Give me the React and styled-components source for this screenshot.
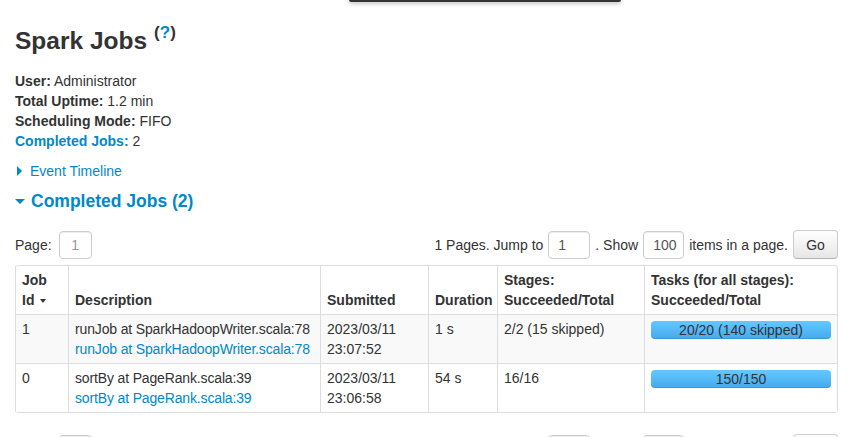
import React from 'react'
import styled, {createGlobalStyle} from 'styled-components'

const GlobalStyle = createGlobalStyle`
  body {
    margin: 0;
    background: #fff;
    color: #333;
    font-family: "Liberation Sans", Arial, sans-serif;
    font-size: 14px;
    line-height: 20px;
  }
`

const Page = styled.div`
  position: relative;
  padding: 0 21px 0 15px;
`

const TopShade = styled.div`
  position: absolute;
  top: 0;
  left: 349px;
  width: 272px;
  height: 2px;
  background: #333;
  box-shadow: 0 1px 4px rgba(0,0,0,0.45);
  border-radius: 0 0 3px 3px;
`

const Title = styled.h3`
  margin: 0;
  padding-top: 15px;
  font-size: 24.5px;
  line-height: 40px;
  font-weight: bold;
  color: #333;
`

const Help = styled.sup`
  font-size: 17px;
  margin-left: 7px;
  position: relative;
  top: -2px;
  color: #333;
  & span { color: #0088cc; }
`

const InfoList = styled.ul`
  list-style: none;
  margin: 10px 0 0;
  padding: 0;
`

const InfoItem = styled.li`
  color: #333;
  & strong { color: ${p => (p.$link ? '#0088cc' : '#333')}; }
`

const Toggle = styled.div`
  display: flex;
  align-items: center;
  color: #0088cc;
  margin-top: ${p => p.$mt}px;
  font-size: ${p => p.$size}px;
  font-weight: ${p => (p.$bold ? 'bold' : 'normal')};
  line-height: 20px;
`

const Caret = styled.span`
  display: inline-block;
  width: 0;
  height: 0;
  margin-right: ${p => p.$gap}px;
  ${p => p.$down
    ? 'border-left: 5px solid transparent; border-right: 5px solid transparent; border-top: 5px solid #0088cc; margin-left: 0;'
    : 'border-top: 5px solid transparent; border-bottom: 5px solid transparent; border-left: 5px solid #0088cc; margin-left: 2px;'}
`

const PagerRow = styled.div`
  display: flex;
  align-items: center;
  justify-content: space-between;
  margin-top: ${p => p.$mt}px;
  height: 29px;
`

const PagerGroup = styled.div`
  display: flex;
  align-items: center;
  white-space: nowrap;
`

const Box = styled.div`
  box-sizing: border-box;
  width: ${p => p.$w}px;
  height: 28px;
  border: 1px solid #ccc;
  border-radius: 4px;
  padding: 3px 9px;
  margin: 0 ${p => p.$mr || 5}px 0 ${p => p.$ml || 5}px;
  color: ${p => (p.$muted ? '#999' : '#555')};
  text-align: ${p => (p.$center ? 'center' : 'left')};
  box-shadow: inset 0 1px 1px rgba(0,0,0,0.075);
  line-height: 20px;
`

const GoButton = styled.button`
  box-sizing: border-box;
  width: 45px;
  height: 29px;
  margin-left: 5px;
  border: 1px solid #ccc;
  border-bottom-color: #b3b3b3;
  border-radius: 4px;
  background: linear-gradient(to bottom, #fff, #e6e6e6);
  font-family: "Liberation Sans", Arial, sans-serif;
  font-size: 14px;
  color: #333;
  padding: 0;
`

const Table = styled.table`
  width: 100%;
  margin-top: 6px;
  border-collapse: separate;
  border-spacing: 0;
  border: 1px solid #ddd;
  border-left: 0;
  border-radius: 4px;
  table-layout: fixed;
`

const Th = styled.th`
  text-align: left;
  vertical-align: bottom;
  font-weight: bold;
  padding: 4px 6px;
  border-left: 1px solid #ddd;
  width: ${p => p.$w}px;
  white-space: nowrap;
`

const Td = styled.td`
  vertical-align: top;
  padding: 4px 6px;
  border-left: 1px solid #ddd;
  border-top: 1px solid #ddd;
  white-space: nowrap;
  letter-spacing: ${p => (p.$tight ? '-0.15px' : 'normal')};
`

const Row = styled.tr`
  background: ${p => (p.$striped ? '#f9f9f9' : '#fff')};
`

const SortArrow = styled.span`
  display: inline-block;
  margin-left: 6px;
  vertical-align: middle;
  border-left: 3px solid transparent;
  border-right: 3px solid transparent;
  border-top: 4px solid #333;
`

const Link = styled.div`
  color: #0088cc;
`

const Bar = styled.div`
  margin: 2px 0 0 0;
  height: 18px;
  line-height: 18px;
  border-radius: 4px;
  text-align: center;
  color: #333;
  background: linear-gradient(to bottom, #64c8ff, #44aaee);
  box-shadow: inset 0 -1px 0 rgba(0,0,0,0.12);
`

const jobs = [
  {id: 1, desc: 'runJob at SparkHadoopWriter.scala:78', date: '2023/03/11', time: '23:07:52', dur: '1 s', stages: '2/2 (15 skipped)', tasks: '20/20 (140 skipped)'},
  {id: 0, desc: 'sortBy at PageRank.scala:39', date: '2023/03/11', time: '23:06:58', dur: '54 s', stages: '16/16', tasks: '150/150'},
]

const Pager = ({mt}) => (
  <PagerRow $mt={mt}>
    <PagerGroup>
      Page:
      <Box $w={33} $muted $center $ml={7}>1</Box>
    </PagerGroup>
    <PagerGroup>
      1 Pages. Jump to
      <Box $w={42}>1</Box>
      . Show
      <Box $w={41}>100</Box>
      items in a page.
      <GoButton>Go</GoButton>
    </PagerGroup>
  </PagerRow>
)

export default function App() {
  return (
    <Page>
      <GlobalStyle />
      <TopShade />
      <Title>
        Spark Jobs
        <Help>(<span>?</span>)</Help>
      </Title>
      <InfoList>
        <InfoItem><strong>User:</strong> Administrator</InfoItem>
        <InfoItem><strong>Total Uptime:</strong> 1.2 min</InfoItem>
        <InfoItem><strong>Scheduling Mode:</strong> FIFO</InfoItem>
        <InfoItem $link><strong>Completed Jobs:</strong> 2</InfoItem>
      </InfoList>
      <Toggle $mt={10} $size={14}>
        <Caret $gap={8} />
        Event Timeline
      </Toggle>
      <Toggle $mt={10} $size={17.5} $bold>
        <Caret $down $gap={6} />
        Completed Jobs (2)
      </Toggle>
      <Pager mt={19} />
      <Table>
        <thead>
          <tr>
            <Th $w={40}>Job<br />Id<SortArrow /></Th>
            <Th $w={239}>Description</Th>
            <Th $w={95}>Submitted</Th>
            <Th $w={56}>Duration</Th>
            <Th $w={134}>Stages:<br />Succeeded/Total</Th>
            <Th>Tasks (for all stages):<br />Succeeded/Total</Th>
          </tr>
        </thead>
        <tbody>
          {jobs.map((j, i) => (
            <Row key={j.id} $striped={i === 0}>
              <Td>{j.id}</Td>
              <Td $tight>
                {j.desc}
                <Link>{j.desc}</Link>
              </Td>
              <Td>{j.date}<br />{j.time}</Td>
              <Td>{j.dur}</Td>
              <Td>{j.stages}</Td>
              <Td><Bar>{j.tasks}</Bar></Td>
            </Row>
          ))}
        </tbody>
      </Table>
      <Pager mt={21} />
    </Page>
  )
}
